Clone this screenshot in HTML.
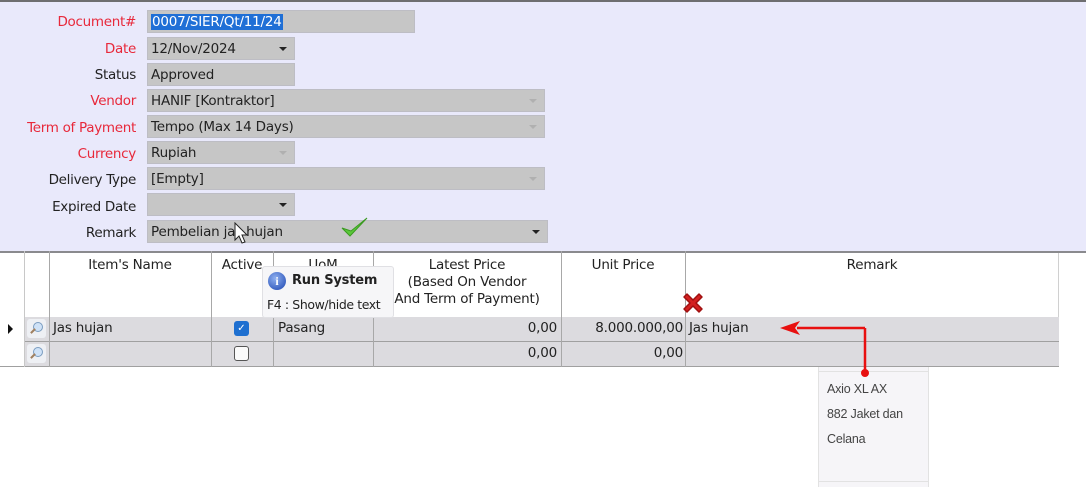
<!DOCTYPE html>
<html><head><meta charset="utf-8"><style>
*{margin:0;padding:0;box-sizing:border-box}
body{width:1086px;height:487px;position:relative;overflow:hidden;background:#fff;font-family:"DejaVu Sans","Liberation Sans",sans-serif;font-size:13px;color:#222}
.a{position:absolute}
.form{left:0;top:0;width:1086px;height:251px;background:#e9e9fb;border-top:2px solid #6e6e70}
.lb{position:absolute;right:950px;text-align:right;white-space:nowrap;font-size:13.5px;letter-spacing:-0.3px}
.r{color:#e8283a}
.f{position:absolute;left:147px;height:23px;background:#c6c6c6;border:1px solid #bdbdc4;padding:3px 3px 0;font-size:13.5px;letter-spacing:-0.2px;white-space:nowrap}
.dd::after{content:"";position:absolute;right:7px;top:9px;border-left:4px solid transparent;border-right:4px solid transparent;border-top:4px solid #222}
.dis::after{border-top-color:#b0b0b0}
.v{position:absolute;top:251px;height:116px;border-left:1px solid #c8c8c8}
.h{position:absolute;font-size:13.5px;text-align:center;letter-spacing:-0.2px;line-height:17px}
.row{position:absolute;left:24px;width:1035px;height:25px;background:#dcdbdf;border-bottom:1px solid #a0a0a0}
.t{position:absolute;font-size:13.5px;white-space:nowrap;letter-spacing:-0.2px}
.mag{position:absolute;left:27px;width:19px;height:19px;background:#eef0f4;border-radius:3px}
.mag::before{content:"";position:absolute;left:6px;top:3px;width:8px;height:8px;border:1.5px solid #7a9cc0;border-radius:50%;background:#cfe2f7}
.mag::after{content:"";position:absolute;left:3px;top:11px;width:6px;height:2px;background:#a08060;transform:rotate(-45deg)}
</style></head><body>
<div class="a form"></div>
<div class="lb r" style="top:14px">Document#</div>
<div class="lb r" style="top:41px">Date</div>
<div class="lb" style="top:67px">Status</div>
<div class="lb r" style="top:93px">Vendor</div>
<div class="lb r" style="top:120px">Term of Payment</div>
<div class="lb r" style="top:146px">Currency</div>
<div class="lb" style="top:172px">Delivery Type</div>
<div class="lb" style="top:199px">Expired Date</div>
<div class="lb" style="top:225px">Remark</div>

<div class="f" style="top:10px;width:268px"><span style="background:#1f6fd6;color:#fff;padding:0 1px">0007/SIER/Qt/11/24</span></div>
<div class="f dd" style="top:37px;width:148px">12/Nov/2024</div>
<div class="f" style="top:63px;width:148px">Approved</div>
<div class="f dd dis" style="top:89px;width:398px">HANIF [Kontraktor]</div>
<div class="f dd dis" style="top:115px;width:398px">Tempo (Max 14 Days)</div>
<div class="f dd dis" style="top:141px;width:148px">Rupiah</div>
<div class="f dd dis" style="top:167px;width:398px">[Empty]</div>
<div class="f dd" style="top:193px;width:148px"></div>
<div class="f dd" style="top:220px;width:401px">Pembelian jas hujan</div>
<svg class="a" style="left:340px;top:216px" width="30" height="24"><path d="M2 12 L10 20 L27 2 L11 15 Z" fill="#5ac83a" stroke="#3a9a20" stroke-width="1"/></svg>
<svg class="a" style="left:234px;top:222px" width="16" height="24"><path d="M1 1 L1 18 L5 14 L8 21 L11 20 L8 13 L13 13 Z" fill="#fff" stroke="#222" stroke-width="1"/></svg>

<div class="a" style="left:0;top:251px;width:1086px;height:2px;background:#8a8a8e"></div>
<div class="a" style="left:0;top:253px;width:1059px;height:114px;background:#fff;border-bottom:1px solid #a0a0a0;border-right:1px solid #d0d0d0"></div>
<div class="row" style="top:317px"></div>
<div class="row" style="top:342px"></div>
<div class="v" style="left:24px"></div><div class="v" style="left:49px;border-color:#a8a8a8"></div>
<div class="v" style="left:211px;border-color:#a8a8a8"></div><div class="v" style="left:273px;border-color:#a8a8a8"></div>
<div class="v" style="left:373px;border-color:#a8a8a8"></div><div class="v" style="left:561px;border-color:#a8a8a8"></div>
<div class="v" style="left:685px;border-color:#a8a8a8"></div>

<div class="h" style="left:49px;width:162px;top:257px">Item's Name</div>
<div class="h" style="left:211px;width:62px;top:257px">Active</div>
<div class="h" style="left:273px;width:100px;top:257px">UoM</div>
<div class="h" style="left:373px;width:188px;top:257px">Latest Price<br>(Based On Vendor<br>And Term of Payment)</div>
<div class="h" style="left:561px;width:124px;top:257px">Unit Price</div>
<div class="h" style="left:685px;width:374px;top:257px">Remark</div>

<div class="a" style="left:8px;top:324px;border-top:5px solid transparent;border-bottom:5px solid transparent;border-left:5px solid #111"></div>
<div class="mag" style="top:319px"></div><div class="mag" style="top:344px"></div>
<div class="t" style="left:53px;top:320px">Jas hujan</div>
<div class="a" style="left:234px;top:321px;width:15px;height:15px;background:#1e6fd0;border-radius:3px;color:#fff;font-size:10px;text-align:center;line-height:15px">✓</div>
<div class="a" style="left:234px;top:346px;width:15px;height:15px;background:#fafafa;border:1px solid #555;border-radius:3px"></div>
<div class="t" style="left:278px;top:320px">Pasang</div>
<div class="t" style="right:529px;top:320px">0,00</div>
<div class="t" style="right:529px;top:345px">0,00</div>
<div class="t" style="right:403px;top:320px">8.000.000,00</div>
<div class="t" style="right:403px;top:345px">0,00</div>
<div class="t" style="left:689px;top:320px">Jas hujan</div>

<div class="a" style="left:262px;top:266px;width:132px;height:52px;background:#f6f6f8;border:1px solid #e0e0e4;border-radius:3px"></div>
<div class="a" style="left:268px;top:272px;width:18px;height:18px;border-radius:50%;background:radial-gradient(circle at 40% 35%,#8fb0f0,#1a44b0);color:#fff;font-weight:bold;font-size:12px;text-align:center;line-height:18px;font-family:'Liberation Serif',serif">i</div>
<div class="t" style="left:292px;top:273px;font-weight:bold;font-size:13px">Run System</div>
<div class="t" style="left:267px;top:297px;font-size:12.5px;letter-spacing:-0.4px">F4 : Show/hide text</div>

<svg class="a" style="left:680px;top:290px" width="26" height="26"><path d="M4 7 L7 4 L13 10 L19 4 L22 7 L16 13 L22 19 L19 22 L13 16 L7 22 L4 19 L10 13 Z" fill="#d42020" stroke="#a01010" stroke-width="1.5" stroke-linejoin="round"/></svg>

<div class="a" style="left:818px;top:367px;width:111px;height:120px;background:#f6f5f8;border-left:1px solid #e2e2e2;border-right:1px solid #e2e2e2"></div>
<div class="a" style="left:818px;top:371px;width:111px;height:1px;background:#e2e2e2"></div>
<div class="a" style="left:818px;top:481px;width:111px;height:1px;background:#e2e2e2"></div>
<div class="t" style="left:827px;top:377px;font-family:'Liberation Sans',sans-serif;font-size:12.5px;line-height:25px;color:#444">Axio XL AX<br>882 Jaket dan<br>Celana</div>

<svg class="a" style="left:775px;top:318px" width="100" height="62"><path d="M90 10 L90 55" stroke="#e81010" stroke-width="2.5" fill="none"/><path d="M22 10 L90 10" stroke="#e81010" stroke-width="2.5"/><path d="M5 10 L25 3 L20 10 L25 17 Z" fill="#e81010"/><circle cx="90" cy="55" r="4" fill="#e81010"/></svg>
</body></html>
